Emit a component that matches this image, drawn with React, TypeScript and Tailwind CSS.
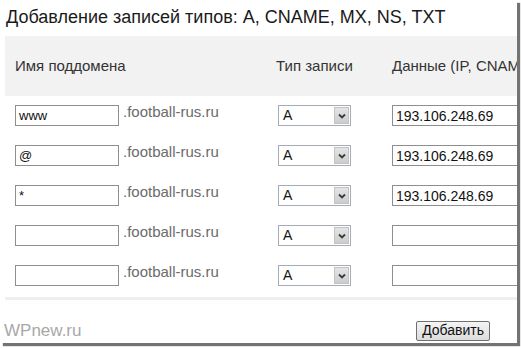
import React from 'react';

const rows = [
  { name: 'www', type: 'A', data: '193.106.248.69' },
  { name: '@', type: 'A', data: '193.106.248.69' },
  { name: '*', type: 'A', data: '193.106.248.69' },
  { name: '', type: 'A', data: '' },
  { name: '', type: 'A', data: '' },
];

// Фейковый select в стиле старой винды
function TypeSelect({ value }: { value: string }) {
  return (
    <div className="flex h-[21px] w-[73px] shrink-0 items-stretch border border-[#a5acb5] bg-white">
      <span className="flex-1 pl-[4px] text-[14px] leading-[19px] text-[#111]">{value}</span>
      <span className="m-[1px] flex w-[15px] items-center justify-center border border-[#c3c3c3] bg-gradient-to-b from-[#e4e4e4] to-[#cdcdcd]">
        <svg width="8" height="6" viewBox="0 0 8 6">
          <path d="M1 1.5 L4 4.5 L7 1.5" stroke="#3a3a3a" strokeWidth="1.8" fill="none" />
        </svg>
      </span>
    </div>
  );
}

export default function App() {
  return (
    <div className="h-[348px] w-[521px] overflow-hidden bg-white font-['Liberation_Sans',Arial,sans-serif]">
      <div className="relative h-[343px] w-[517px] overflow-hidden bg-white shadow-[3px_3px_1px_rgba(0,0,0,0.55)]">
        {/* заголовок */}
        <div className="whitespace-nowrap pl-[6px] pt-[6px] text-[18px] leading-[23px] text-[#1a1a1a]">
          Добавление записей типов: A, CNAME, MX, NS, TXT
        </div>

        {/* шапка таблицы */}
        <div className="ml-[5px] mt-[7px] flex h-[60px] items-center whitespace-nowrap bg-[#f2f2f2] text-[15px] text-[#333]">
          <span className="w-[271px] shrink-0 pl-[10px]">Имя поддомена</span>
          <span className="w-[116px] shrink-0">Тип записи</span>
          <span className="shrink-0">Данные (IP, CNAME)</span>
        </div>

        {/* строки */}
        <div className="flex flex-col gap-[19px] pt-[9px]">
          {rows.map((row, i) => (
            <div key={i} className="flex h-[21px] items-start whitespace-nowrap">
              <div className="ml-[15px] h-[21px] w-[104px] shrink-0 border border-[#8e8e8e] pl-[3px] text-[13px] leading-[20px] text-[#111]">
                {row.name}
              </div>
              <span className="-mt-[2px] ml-[4px] w-[155px] shrink-0 text-[15px] leading-[18px] text-[#6b6b6b]">.football-rus.ru</span>
              <TypeSelect value={row.type} />
              <div className="ml-[41px] h-[21px] w-[160px] shrink-0 border border-[#8e8e8e] pl-[3px] text-[14px] leading-[20px] text-[#111]">
                {row.data}
              </div>
            </div>
          ))}
        </div>

        <div className="ml-[5px] mt-[11px] h-[3px] bg-[#efefef]" />

        {/* подвал */}
        <div className="flex items-center justify-between pt-[18px]">
          <span className="pl-[4px] text-[17px] text-[#a8a8a8]">WPnew.ru</span>
          <button className="mr-[27px] h-[20px] rounded-[2px] border border-[#707070] bg-gradient-to-b from-[#f4f4f4] to-[#dcdcdc] px-[5px] text-[14px] leading-[17px] text-[#111]">
            Добавить
          </button>
        </div>
      </div>
    </div>
  );
}
